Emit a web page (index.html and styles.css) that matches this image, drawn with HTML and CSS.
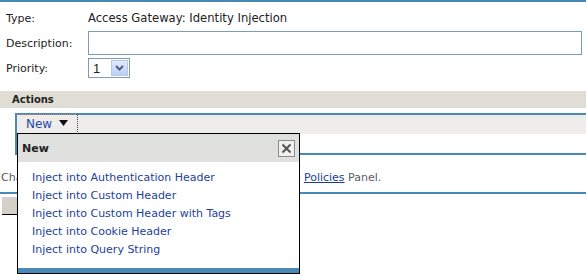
FILE: index.html
```html
<!DOCTYPE html>
<html lang="en">
<head>
  <meta charset="UTF-8" />
  <title>Identity Injection Rule</title>
  <link rel="stylesheet" href="styles.css">
</head>
<body>

<div class="page">
  <!-- rule header fields -->
  <div class="form">
    <span class="label">Type:</span>
    <span class="value">Access Gateway: Identity Injection</span>

    <span class="label">Description:</span>
    <input class="text-input" type="text" />

    <span class="label">Priority:</span>
    <div class="select">
      <span class="select-value">1</span>
      <span class="select-btn">
        <svg width="9" height="6" viewBox="0 0 9 6"><path d="M1 1 L4.5 4.5 L8 1" fill="none" stroke="#4c5f86" stroke-width="2"/></svg>
      </span>
    </div>
  </div>

  <div class="section-bar">Actions</div>

  <div class="actions-panel">
    <div class="toolbar">
      <a class="tool-btn" href="#">New
        <svg class="caret" width="9" height="6" viewBox="0 0 9 6"><path d="M0 0 H9 L4.5 6 Z" fill="#111"/></svg>
      </a>
    </div>
    <div class="actions-list"></div>
  </div>

  <p class="note">Changes are not saved until you click Apply/OK on the <a href="#">Policies</a> Panel.</p>

  <div class="button-bar">
    <span class="btn-stub"></span>
  </div>

  <!-- New action popup -->
  <div class="popup">
    <div class="popup-head">
      <span>New</span>
      <span class="close-btn">
        <svg width="11" height="11" viewBox="0 0 11 11"><path d="M1.5 1.5 L9.5 9.5 M9.5 1.5 L1.5 9.5" stroke="#555" stroke-width="2"/></svg>
      </span>
    </div>
    <ul class="popup-list">
      <li><a href="#">Inject into Authentication Header</a></li>
      <li><a href="#">Inject into Custom Header</a></li>
      <li><a href="#">Inject into Custom Header with Tags</a></li>
      <li><a href="#">Inject into Cookie Header</a></li>
      <li><a href="#">Inject into Query String</a></li>
    </ul>
    <div class="popup-foot"></div>
  </div>
</div>

</body>
</html>
```

FILE: styles.css
```css
body {
  margin: 0;
  font-family: "DejaVu Sans", Verdana, sans-serif;
  font-size: 11px;
  color: #222;
  background: #fff;
}

.page {
  position: relative;
  width: 586px;
  height: 274px;
  overflow: hidden;
  border-top: 2px solid #4a88b5;
  box-sizing: border-box;
}

a {
  color: #1c3f98;
  text-decoration: none;
}

/* form rows */
.form {
  display: grid;
  grid-template-columns: 82px 1fr;
  grid-template-rows: 20px 24px 20px;
  row-gap: 3px;
  align-items: center;
  padding: 6px 4px 0 6px;
}

.value {
  font-size: 11.6px;
}

.text-input {
  height: 24px;
  box-sizing: border-box;
  border: 1px solid #7c9cb8;
  margin: 0;
  width: 100%;
}

.select {
  width: 42px;
  height: 20px;
  box-sizing: border-box;
  border: 1px solid #7c9cb8;
  display: flex;
  align-items: center;
  justify-content: space-between;
  padding: 1px;
}

.select-value {
  padding-left: 3px;
  font-family: "Liberation Sans", Arial, sans-serif;
  font-size: 13px;
}

.select-btn {
  width: 17px;
  height: 16px;
  box-sizing: border-box;
  border: 1px solid #b5c8ee;
  background: linear-gradient(#e2ebfd, #bccff5);
  display: flex;
  align-items: center;
  justify-content: center;
}

/* actions */
.section-bar {
  margin-top: 13px;
  height: 17px;
  line-height: 17px;
  background: #e0ddd5;
  padding-left: 12px;
  font-weight: bold;
  font-size: 10px;
}

.actions-panel {
  margin: 5px 0 0 15px;
  border-top: 2px solid #4a88b5;
  border-left: 2px solid #4a88b5;
  border-bottom: 2px solid #4a88b5;
}

.toolbar {
  height: 19px;
  background: #eeedeb;
  display: flex;
}

.tool-btn {
  width: 61px;
  box-sizing: border-box;
  padding-left: 9px;
  line-height: 19px;
  color: #2547ad;
  font-size: 12px;
  border-right: 1px dotted #444;
  border-top: 1px dotted #d08a50;
  margin-top: -1px;
}

.caret {
  margin-left: 3px;
  vertical-align: 2px;
}

.actions-list {
  height: 19px;
}

.note {
  margin: 15px 0 0 0;
  padding-left: 1px;
  line-height: 16px;
  color: #555c66;
}

.note a {
  text-decoration: underline;
}

.button-bar {
  margin-top: 6px;
  border-top: 2px solid #4a88b5;
  padding: 3px 0 0 2px;
}

.btn-stub {
  display: block;
  width: 120px;
  height: 17px;
  background: #d4d0c8;
  border-bottom: 1px solid #000;
}

/* popup menu */
.popup {
  position: absolute;
  left: 17px;
  top: 131px;
  width: 283px;
  height: 141px;
  box-sizing: border-box;
  border: 1px solid #000;
  background: #fff;
  display: flex;
  flex-direction: column;
}

.popup-head {
  height: 28px;
  background: #e0e0de;
  display: flex;
  align-items: center;
  justify-content: space-between;
  padding: 1px 4px 0 4px;
  box-sizing: border-box;
  font-weight: bold;
}

.close-btn {
  width: 17px;
  height: 17px;
  box-sizing: border-box;
  border: 1px solid #8c8c8c;
  background: #f0f0f0;
  display: flex;
  align-items: center;
  justify-content: center;
}

.popup-list {
  list-style: none;
  margin: 0;
  padding: 7px 0 0 14px;
  flex: 1;
}

.popup-list li {
  line-height: 18px;
}

.popup-foot {
  height: 5px;
  background: #4a88b5;
}
```
